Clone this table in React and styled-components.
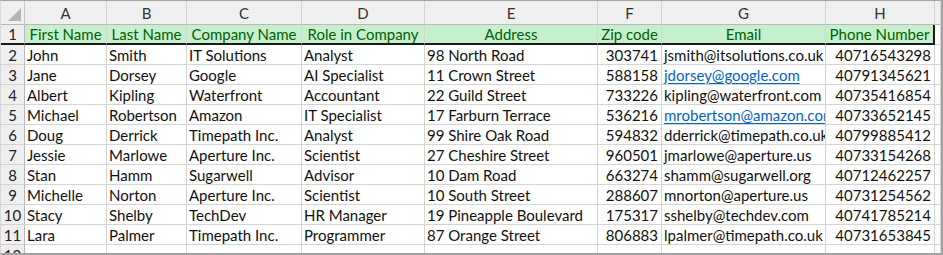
import React from "react";
import styled, { createGlobalStyle } from "styled-components";

const Global = createGlobalStyle`
  html, body {
    margin: 0;
    padding: 0;
    background: #ffffff;
  }
`;

const columns = ["A", "B", "C", "D", "E", "F", "G", "H", ""];
const widths = [82, 80, 115, 123, 173, 64, 164, 109];

const titles = [
  "First Name",
  "Last Name",
  "Company Name",
  "Role in Company",
  "Address",
  "Zip code",
  "Email",
  "Phone Number",
];

const people = [
  ["John", "Smith", "IT Solutions", "Analyst", "98 North Road", "303741", "jsmith@itsolutions.co.uk", "40716543298"],
  ["Jane", "Dorsey", "Google", "AI Specialist", "11 Crown Street", "588158", "jdorsey@google.com", "40791345621", true],
  ["Albert", "Kipling", "Waterfront", "Accountant", "22 Guild Street", "733226", "kipling@waterfront.com", "40735416854"],
  ["Michael", "Robertson", "Amazon", "IT Specialist", "17 Farburn Terrace", "536216", "mrobertson@amazon.com", "40733652145", true],
  ["Doug", "Derrick", "Timepath Inc.", "Analyst", "99 Shire Oak Road", "594832", "dderrick@timepath.co.uk", "40799885412"],
  ["Jessie", "Marlowe", "Aperture Inc.", "Scientist", "27 Cheshire Street", "960501", "jmarlowe@aperture.us", "40733154268"],
  ["Stan", "Hamm", "Sugarwell", "Advisor", "10 Dam Road", "663274", "shamm@sugarwell.org", "40712462257"],
  ["Michelle", "Norton", "Aperture Inc.", "Scientist", "10 South Street", "288607", "mnorton@aperture.us", "40731254562"],
  ["Stacy", "Shelby", "TechDev", "HR Manager", "19 Pineapple Boulevard", "175317", "sshelby@techdev.com", "40741785214"],
  ["Lara", "Palmer", "Timepath Inc.", "Programmer", "87 Orange Street", "806883", "lpalmer@timepath.co.uk", "40731653845"],
];

const Sheet = styled.div`
  box-sizing: border-box;
  width: 943px;
  height: 255px;
  overflow: hidden;
  border-top: 1px solid #a3a3a3;
  border-left: 1px solid #d6d6d6;
  border-right: 2px solid #a3a3a3;
  border-bottom: 2px solid #a3a3a3;
  display: grid;
  grid-template-columns: 24px ${widths.map((w) => w + "px").join(" ")} 1fr;
  grid-auto-rows: 20px;
  grid-template-rows: 24px 20px;
  font-family: Lato, "Open Sans", sans-serif;
  font-size: 15px;
  color: #111;
`;

const Corner = styled.div`
  position: relative;
  box-sizing: border-box;
  background: #efefef;
  border-right: 1px solid #c8c8c8;
  border-bottom: 1px solid #b8b8b8;
  &::after {
    content: "";
    position: absolute;
    right: 3px;
    bottom: 3px;
    width: 0;
    height: 0;
    border-left: 13px solid transparent;
    border-bottom: 13px solid #b4b4b4;
  }
`;

const ColHead = styled.div`
  box-sizing: border-box;
  background: #efefef;
  border-right: 1px solid #d2d2d2;
  border-bottom: 1px solid #b8b8b8;
  display: flex;
  align-items: center;
  justify-content: center;
  color: #333;
  padding-top: 1px;
`;

const RowHead = styled.div`
  box-sizing: border-box;
  background: #efefef;
  border-right: 1px solid #b8b8b8;
  border-bottom: 1px solid ${(p) => (p.$thick ? "#1a1a1a" : "#d2d2d2")};
  border-bottom-width: ${(p) => (p.$thick ? "2px" : "1px")};
  display: flex;
  align-items: center;
  justify-content: center;
  color: #222;
`;

const Cell = styled.div`
  box-sizing: border-box;
  min-width: 0;
  overflow: hidden;
  white-space: nowrap;
  display: flex;
  align-items: center;
  justify-content: ${(p) => p.$align || "flex-start"};
  padding: 0 3px 0 2px;
  border-right: 1px solid #d4d4d4;
  border-bottom: 1px solid #d4d4d4;
`;

const TitleCell = styled(Cell)`
  background: ${(p) => (p.$blank ? "#ffffff" : "#c6efce")};
  color: #006100;
  justify-content: center;
  padding: 0;
  border-bottom: 2px solid ${(p) => (p.$blank ? "#d4d4d4" : "#1a1a1a")};
  border-bottom-width: ${(p) => (p.$blank ? "1px" : "2px")};
  border-right: ${(p) => (p.$last ? "2px solid #1a1a1a" : "1px solid #d4d4d4")};
`;

const Link = styled.span`
  color: #0563c1;
  text-decoration: underline;
  text-underline-offset: 2px;
`;

export default function App() {
  return (
    <>
      <Global />
      <Sheet>
        <Corner />
        {columns.map((c, i) => (
          <ColHead key={i}>{c}</ColHead>
        ))}

        <RowHead $thick>1</RowHead>
        {titles.map((t, i) => (
          <TitleCell key={i} $last={i === titles.length - 1}>
            {t}
          </TitleCell>
        ))}
        <TitleCell $blank />

        {people.map((p, r) => (
          <React.Fragment key={r}>
            <RowHead>{r + 2}</RowHead>
            {p.slice(0, 8).map((v, i) => (
              <Cell key={i} $align={i === 5 || i === 7 ? "flex-end" : "flex-start"}>
                {i === 6 && p[8] ? <Link>{v}</Link> : v}
              </Cell>
            ))}
            <Cell />
          </React.Fragment>
        ))}

        <RowHead>12</RowHead>
        {columns.map((c, i) => (
          <Cell key={i} />
        ))}
      </Sheet>
    </>
  );
}
